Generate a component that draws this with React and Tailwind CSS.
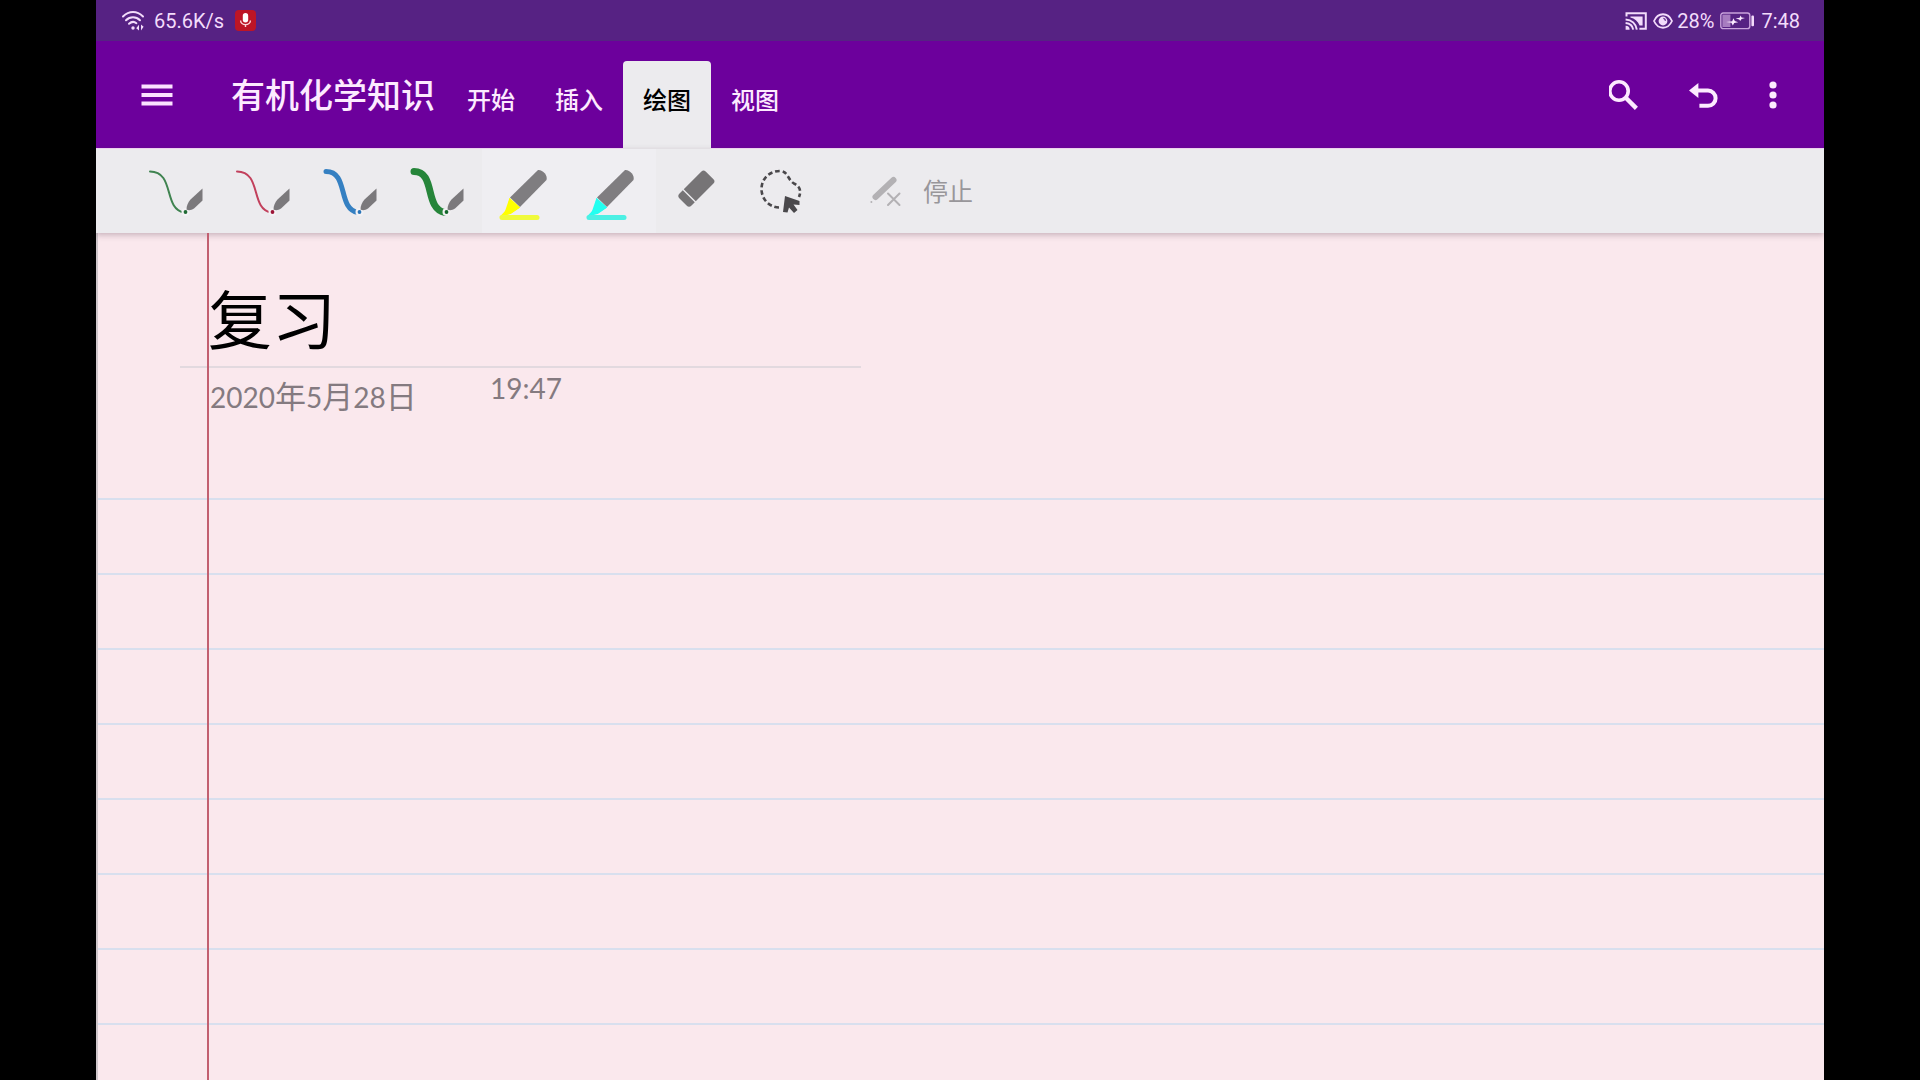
const uiFont = "font-['Roboto','Noto_Sans_CJK_SC',sans-serif]";

const tabs = [
  { id: "home", label: "开始" },
  { id: "insert", label: "插入" },
  { id: "draw", label: "绘图", active: true },
  { id: "view", label: "视图" },
];

const pens = [
  { id: "pen-green-thin", label: "绿色细笔", color: "#3f8350", dot: "#1f6b34", width: 2, start: 16 },
  { id: "pen-red-thin", label: "红色细笔", color: "#c2405c", dot: "#9c1436", width: 2, start: 16 },
  { id: "pen-blue", label: "蓝色笔", color: "#3580c2", dot: "#2a75b8", width: 5, start: 18 },
  { id: "pen-green", label: "绿色粗笔", color: "#26853a", dot: "#12662a", width: 7, start: 19 },
];

const highlighters = [
  { id: "hl-yellow", label: "黄色荧光笔", tip: "#ffff00", line: "#f0fa3c" },
  { id: "hl-cyan", label: "青色荧光笔", tip: "#22fff0", line: "#4cf0e4" },
];

const rules = [0, 1, 2, 3, 4, 5, 6];

function WifiIcon() {
  return (
    <svg width="24" height="22" viewBox="0 0 24 22" fill="none" stroke="#f3dcfb" strokeWidth="2" strokeLinecap="round">
      <path d="M2 6.5C8 0.6 16 0.6 22 6.5" />
      <path d="M5 10.2C9 6.2 15 6.2 19 10.2" />
      <path d="M8 13.8C10.4 11.6 13.4 11.6 15.4 13.2" />
      <circle cx="12" cy="18" r="1.7" fill="#f3dcfb" stroke="none" />
      <path d="M15.2 18.3L18 14.8V20.4ZM20 14.6V20.4L22.6 16.8Z" fill="#f3dcfb" stroke="none" />
    </svg>
  );
}

function MicBadge() {
  return (
    <svg width="21" height="21" viewBox="0 0 21 21">
      <rect width="21" height="21" rx="4" fill="#bd1526" />
      <rect x="7.8" y="3" width="5.4" height="9.4" rx="2.7" fill="#fff" />
      <path d="M5.6 10.4a4.9 4.2 0 0 0 9.8 0M10.5 14.6V17" fill="none" stroke="#fbd5da" strokeWidth="1.4" />
    </svg>
  );
}

function CastIcon() {
  return (
    <svg width="22" height="18" viewBox="0 0 22 18" fill="none" stroke="#f3dcfb" strokeWidth="2">
      <path d="M1.5 4.6V1.2H20.8V16.8H14.4" />
      <path d="M5.4 4.4H17.6V13.6H14.6C12.8 9.4 9.6 6.6 5.4 5.6Z" fill="#f3dcfb" stroke="none" />
      <path d="M0.6 7.4C6.6 7.8 11 11.6 11.8 17.6M0.6 11C4.6 11.4 7.6 13.8 8.2 17.6" />
      <path d="M0.6 13.8A4 4 0 0 1 4.6 17.8H0.6Z" fill="#f3dcfb" stroke="none" />
    </svg>
  );
}

function EyeIcon() {
  return (
    <svg width="20" height="16" viewBox="0 0 20 16" fill="none" stroke="#f3dcfb" strokeWidth="1.8">
      <path d="M1 8C5 -1 15 -1 19 8C15 17 5 17 1 8Z" />
      <circle cx="10" cy="8" r="4.4" fill="#f3dcfb" stroke="none" />
      <path d="M10.4 5.4a2.4 2.4 0 0 1 2 2.4" stroke="#562283" strokeWidth="1.3" />
    </svg>
  );
}

function BatteryIcon() {
  return (
    <svg width="35" height="18" viewBox="0 0 35 18">
      <rect x="0.8" y="1" width="29" height="15.6" rx="2.4" fill="none" stroke="#c9a3dc" strokeWidth="1.4" />
      <rect x="2.4" y="2.6" width="8" height="12.4" fill="#a77cc0" />
      <path
        d="M6 10L12.2 9.2L13.4 6.2L14.8 9L18.2 10.2L14.2 11L12.8 13.6L11.4 10.8Z"
        fill="#fbeaff"
      />
      <path d="M15.6 6.6L19.6 5.8L20.6 3.6L21.6 5.4L25 6L21.6 7L20.2 9L19.2 7.4Z" fill="#fbeaff" />
      <rect x="31.4" y="3.6" width="2.6" height="10.6" rx="1" fill="#f3dcfb" />
    </svg>
  );
}

function StatusBar() {
  return (
    <div className="flex h-[41px] items-center justify-between bg-[#562283] pr-6 pl-[25px] text-xl leading-6 text-[#f3dcfb]">
      <div className="flex items-center">
        <WifiIcon />
        <span className="ml-[9px]">65.6K/s</span>
        <span className="ml-[11px]">
          <MicBadge />
        </span>
      </div>
      <div className="flex items-center">
        <CastIcon />
        <span className="ml-1.5">
          <EyeIcon />
        </span>
        <span className="ml-1">28%</span>
        <span className="ml-1.5">
          <BatteryIcon />
        </span>
        <span className="ml-1.5">7:48</span>
      </div>
    </div>
  );
}

function Header() {
  return (
    <header className="flex h-[108px] items-stretch border-b border-[#f7dcfa] bg-[#6c009c] bg-clip-padding text-[#fdeaff]">
      <button type="button" aria-label="菜单" className="flex w-[121px] items-center justify-center">
        <svg width="32" height="24" viewBox="0 0 32 24" fill="#fbe2ff">
          <path d="M0.5 1.5h31v4h-31zM0.5 10h31v4h-31zM0.5 18.5h31v4h-31z" />
        </svg>
      </button>
      <h1 className="flex w-[230px] items-center pt-0.5 pl-[14px] text-[34px] leading-10 font-medium">有机化学知识</h1>
      <nav className="flex items-end">
        {tabs.map((tab) => (
          <button
            key={tab.id}
            type="button"
            className={`-mb-px h-[88px] w-[88px] rounded-t pb-2 text-2xl font-medium ${
              tab.active ? "bg-[#ecebee] text-black" : "border-b border-[#f7dcfa]"
            }`}
          >
            {tab.label}
          </button>
        ))}
      </nav>
      <div className="ml-auto flex items-center pr-[23px]">
        <button type="button" aria-label="搜索" className="flex w-20 justify-center">
          <svg width="32" height="32" viewBox="0 0 32 32" fill="none" stroke="#fdeaff">
            <circle cx="10" cy="12" r="9.2" strokeWidth="3.6" />
            <path d="M16.8 18.8L27.4 29.4" strokeWidth="4.4" />
          </svg>
        </button>
        <button type="button" aria-label="撤消" className="flex w-20 justify-center">
          <svg width="32" height="28" viewBox="0 0 32 28">
            <path d="M0 9.6L9.4 2V17Z" fill="#fdeaff" />
            <path d="M8.4 9.6H19a7.6 7.6 0 0 1 0 15.2H10.4" fill="none" stroke="#fdeaff" strokeWidth="4" />
          </svg>
        </button>
        <button type="button" aria-label="更多" className="flex w-14 justify-center">
          <svg width="8" height="28" viewBox="0 0 8 28" fill="#fdeaff">
            <circle cx="4" cy="4" r="3.6" />
            <circle cx="4" cy="14" r="3.6" />
            <circle cx="4" cy="24" r="3.6" />
          </svg>
        </button>
      </div>
    </header>
  );
}

function PenIcon({ pen }) {
  return (
    <svg width="87" height="84" viewBox="0 0 87 84">
      <path
        d={`M${pen.start} 22.5C41 22.5 29 60 50 63.5`}
        fill="none"
        stroke={pen.color}
        strokeWidth={pen.width}
        strokeLinecap="round"
      />
      <circle cx="51.5" cy="63" r="4" fill="#f3f1f4" />
      <circle cx="51.5" cy="63" r="1.9" fill={pen.dot} />
      <path d="M68.5 39.5V51.5L60 59.5C57 61.5 54.5 61.5 52.5 60.5C52.5 57 54 53 56.5 50.5Z" fill="#7b797c" />
    </svg>
  );
}

function HighlighterIcon({ tip, line }) {
  return (
    <svg width="87" height="84" viewBox="0 0 87 84">
      <path d="M56 21C60.5 20.5 66 26 64.5 31L38 58L28 48.5Z" fill="#7f7d80" />
      <path d="M27.5 49L38 58.5L28.5 65L17.5 68L25 60Z" fill={tip} />
      <path d="M27.5 49L38 58.5L28.5 65H22Z" fill={tip} />
      <path d="M20 68.5H55" stroke={line} strokeWidth="5" strokeLinecap="round" />
    </svg>
  );
}

function EraserIcon() {
  return (
    <svg width="87" height="84" viewBox="0 0 87 84">
      <g transform="rotate(45 38 42)" fill="#767476">
        <path d="M29.5 23a3 3 0 0 1 3-3h11a3 3 0 0 1 3 3V48h-17z" />
        <path d="M29.5 49.4h17V54a3.5 3.5 0 0 1-3.5 3.5h-10a3.5 3.5 0 0 1-3.5-3.5z" />
      </g>
    </svg>
  );
}

function LassoIcon() {
  return (
    <svg width="87" height="84" viewBox="0 0 87 84">
      <path
        d="M36 58.5C25 58 18.5 49 18.5 40C18.5 29 27 22 37 22C45 22 44 30 51 34.5C57 37.5 58.5 42 56 48"
        fill="none"
        stroke="#4a484b"
        strokeWidth="2.6"
        strokeDasharray="4.6 2.8"
      />
      <path d="M42 47L56.5 52V56L50.5 55.5L54.5 61L51 64L46 58.5L44.5 63.5L40 63Z" fill="#4a484b" />
    </svg>
  );
}

function StopIcon() {
  return (
    <svg width="34" height="34" viewBox="0 0 34 34" stroke="#b3b1b4" strokeLinecap="round">
      <path d="M6.5 23L24.5 6" strokeWidth="6" />
      <circle cx="2.4" cy="28" r="1" fill="#b3b1b4" stroke="none" />
      <path d="M19 19.5L30.5 31M30.5 19.5L19 31" strokeWidth="2" />
    </svg>
  );
}

function Toolbar() {
  return (
    <div className="relative flex h-[84px] items-center bg-[#ecebee] pl-[38px] shadow-[0_2px_6px_rgba(80,50,70,0.3)]">
      {pens.map((pen) => (
        <button key={pen.id} type="button" aria-label={pen.label} className="w-[87px]">
          <PenIcon pen={pen} />
        </button>
      ))}
      {highlighters.map((hl) => (
        <button key={hl.id} type="button" aria-label={hl.label} className="w-[87px] bg-[#efeef2]">
          <HighlighterIcon tip={hl.tip} line={hl.line} />
        </button>
      ))}
      <button type="button" aria-label="橡皮擦" className="w-[87px]">
        <EraserIcon />
      </button>
      <button type="button" aria-label="套索选择" className="w-[87px]">
        <LassoIcon />
      </button>
      <button type="button" className="ml-[39px] flex items-center gap-5 text-[25px] leading-8 text-[#98969a]">
        <StopIcon />
        <span className="pt-1">停止</span>
      </button>
    </div>
  );
}

function NotePage() {
  return (
    <main className="flex flex-1 border-l-2 border-[#cfc6cb] bg-[#fae8ed]">
      <div className="relative flex flex-1 flex-col">
        <div className="h-[267px] border-b-2 border-[#d8dfee] pl-[82px] font-['Lato','Noto_Sans_CJK_SC',sans-serif]">
          <div className="flex h-[135px] w-[681px] items-end border-b-2 border-[#e2d9df] pb-1.5 pl-[28px]">
            <h2 className="text-[64px] leading-[80px] text-black">复习</h2>
          </div>
          <div className="flex items-start pl-[30px] text-[28px] leading-10 text-[#847a80]">
            <p className="w-[280px] pt-2">
              2020<span className="text-[31px]">年</span>5<span className="text-[31px]">月</span>28
              <span className="text-[31px]">日</span>
            </p>
            <p>19:47</p>
          </div>
        </div>
        {rules.map((rule) => (
          <div key={rule} className="h-[75px] border-b-2 border-[#d8dfee]" />
        ))}
        <div className="absolute inset-y-0 left-[109px] w-[2px] bg-[#c25f70]" />
      </div>
    </main>
  );
}

export default function App() {
  return (
    <div className="min-h-screen bg-black px-[5%]">
      <div className={`flex min-h-screen flex-col overflow-hidden ${uiFont}`}>
        <StatusBar />
        <Header />
        <Toolbar />
        <NotePage />
      </div>
    </div>
  );
}
